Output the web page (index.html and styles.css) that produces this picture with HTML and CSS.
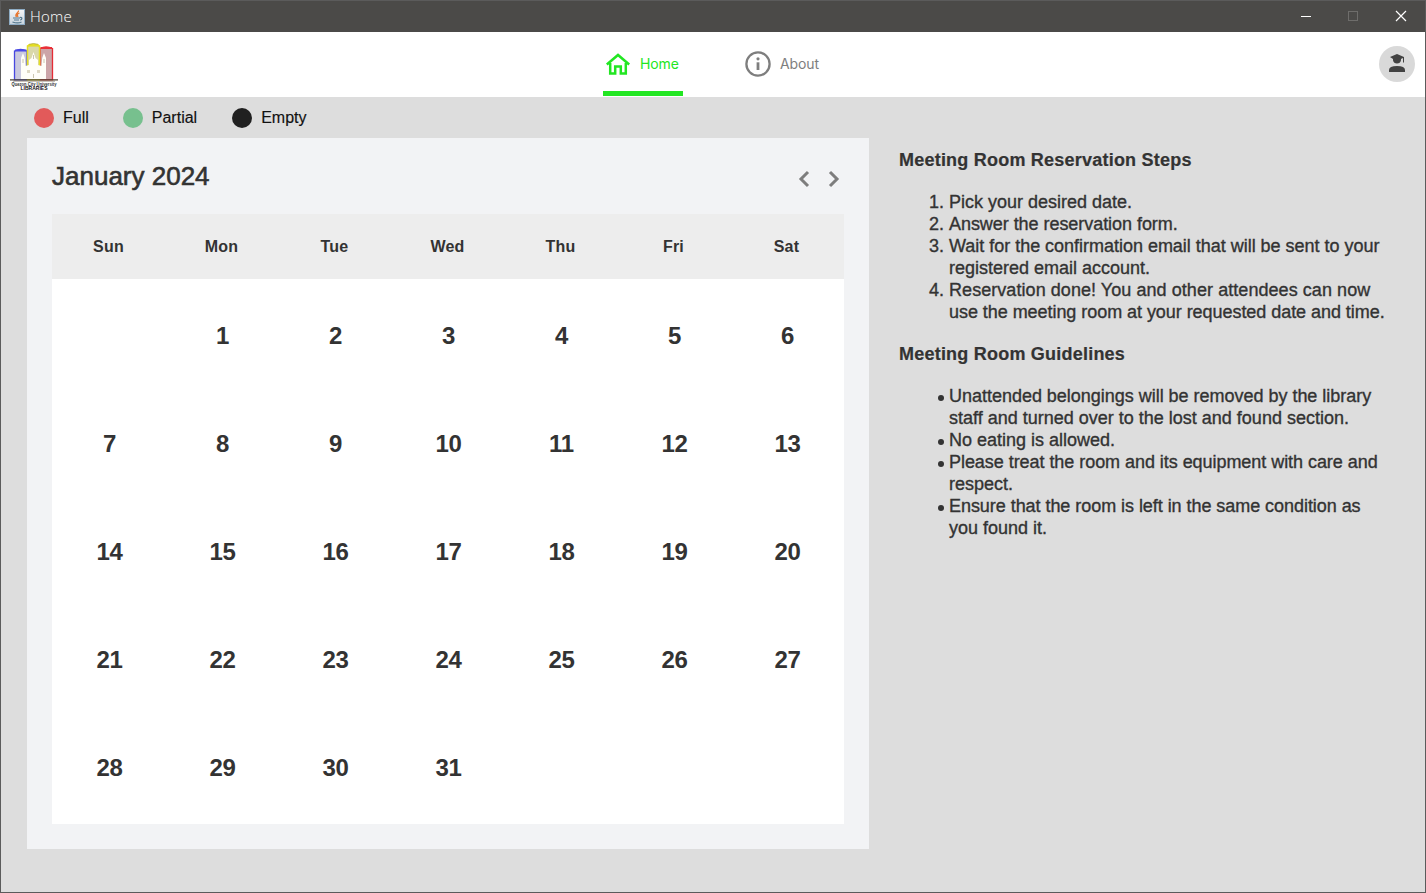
FILE: index.html
```
<!DOCTYPE html>
<html lang="en">
<head>
<meta charset="utf-8">
<title>Home</title>
<link rel="stylesheet" href="styles.css">
</head>
<body>
<div class="window">
  <div class="titlebar">
    <svg class="java" width="16" height="16" viewBox="0 0 16 16">
      <defs><linearGradient id="jg" x1="0" y1="0" x2="0" y2="1"><stop offset="0" stop-color="#f4f6f8"/><stop offset="1" stop-color="#c7d3dd"/></linearGradient></defs>
      <rect x=".5" y=".5" width="15" height="15" fill="url(#jg)" stroke="#8eacc4"/>
      <path d="M9.500 1.500C10 4 5 4.500 7.500 8M10.500 4C8 5 8 6 9 8" fill="none" stroke="#e8752d" stroke-width="1.300"/>
      <path d="M4 9h7M5 11h5M3.500 13c3 1 7 1 9 0M11 8.500c2.500-.5 2.500 2 0 2.500" fill="none" stroke="#54798f" stroke-width="1.200"/>
    </svg>
    <span class="caption">Home</span>
    <svg class="controls" width="126" height="31" viewBox="0 0 126 31">
      <path d="M1 15.500h10" stroke="#fff"/>
      <rect x="48.500" y="10.500" width="9" height="9" fill="none" stroke="#6e6d6b"/>
      <path d="M96 10l10 10M106 10l-10 10" stroke="#fff" stroke-width="1.200"/>
    </svg>
  </div>
  <header class="header">
    <svg class="logo" width="50" height="54" viewBox="0 0 50 54">
      <path d="M5.500 38V9q6-3 12.500 0v29z" fill="#c9c8de" stroke="#4747df" stroke-width="1.300"/>
      <path d="M6 8.500h11.500" stroke="#4b4be6" stroke-width="2"/>
      <path d="M31 38V6.500q6-3 12.500 0V38z" fill="#cca5a8" stroke="#e52c35" stroke-width="1.300"/>
      <path d="M31.500 6H43" stroke="#ea2f37" stroke-width="2"/>
      <path d="M18.500 38V4q6-3.500 12 0v34z" fill="#dad8a9" stroke="#e5df25" stroke-width="1.500"/>
      <path d="M19 3.500h11" stroke="#e4de22" stroke-width="2.200"/>
      <path d="M20 2.300q4.500-1.500 9 0" fill="none" stroke="#a8a23c" stroke-width=".7"/>
      <path d="M12 37V16l2-5 1.800 5 .7 8 3.500-1v-5l2.500-2 2-6 2 6 2.500 2v5l3.500 1 .7-8 1.800-5 2 5v21z" fill="#fffef8"/>
      <path d="M18 31v-3h3v3M28 31v-3h3v3" fill="#ded9c5"/>
      <path d="M24.500 13v4M24.500 36v-4M14 17v4M35 17v4" stroke="#cbc6ae"/>
      <path d="M1 37.800h48" stroke="#4b4335" stroke-width="1.200"/><path d="M4 39h42" stroke="#8d8475"/>
      <text class="logo-name" x="25" y="43.500" textLength="45" lengthAdjust="spacingAndGlyphs" text-anchor="middle">Quezon City University</text>
      <text class="logo-lib" x="25" y="48" textLength="27" lengthAdjust="spacingAndGlyphs" text-anchor="middle">LIBRARIES</text>
    </svg>
    <nav class="nav">
      <a class="tab active">
        <svg width="24" height="22" viewBox="0 0 24 22" fill="none" stroke="#22e622" stroke-width="2.500"><path d="M.8 11.500L12 2l11.200 9.500M4.200 10v10.500h5v-7h5.600v7h5V10"/></svg>
        <span>Home</span>
      </a>
      <a class="tab about">
        <svg width="26" height="26" viewBox="0 0 26 26"><circle cx="13" cy="13" r="11.600" fill="none" stroke="#7e7e7e" stroke-width="2.300"/><circle cx="13" cy="7.800" r="1.600" fill="#7e7e7e"/><path d="M13 11.300v7.700" stroke="#7e7e7e" stroke-width="2.800"/></svg>
        <span>About</span>
      </a>
    </nav>
    <svg class="avatar" width="36" height="36" viewBox="0 0 36 36">
      <circle cx="18" cy="18" r="18" fill="#d9d9d9"/>
      <g fill="#424242"><path d="M11 11l7-3 7 3v5.500h-1V12l-2 1v1.200a4.100 4.100 0 0 1-8 0V13z"/><path d="M10 26v-2q0-4 8-4t8 4v2z"/></g>
    </svg>
  </header>
  <div class="legend">
    <span class="item"><i class="dot full"></i>Full</span>
    <span class="item"><i class="dot partial"></i>Partial</span>
    <span class="item"><i class="dot empty"></i>Empty</span>
  </div>
  <main class="main">
    <section class="calendar">
      <div class="cal-head">
        <h1>January 2024</h1>
        <svg width="42" height="18" viewBox="0 0 42 18" fill="none" stroke="#7d7d7d" stroke-width="3"><path d="M10 2L3 9l7 7M32 2l7 7-7 7"/></svg>
      </div>
      <div class="week"><span>Sun</span><span>Mon</span><span>Tue</span><span>Wed</span><span>Thu</span><span>Fri</span><span>Sat</span></div>
      <div class="days">
        <span></span><span>1</span><span>2</span><span>3</span><span>4</span><span>5</span><span>6</span>
        <span>7</span><span>8</span><span>9</span><span>10</span><span>11</span><span>12</span><span>13</span>
        <span>14</span><span>15</span><span>16</span><span>17</span><span>18</span><span>19</span><span>20</span>
        <span>21</span><span>22</span><span>23</span><span>24</span><span>25</span><span>26</span><span>27</span>
        <span>28</span><span>29</span><span>30</span><span>31</span>
      </div>
    </section>
    <aside class="info">
      <h2>Meeting Room Reservation Steps</h2>
      <ul class="list">
        <li><b class="num">1.</b><p>Pick your desired date.</p></li>
        <li><b class="num">2.</b><p class="snug">Answer the reservation form.</p></li>
        <li><b class="num">3.</b><p><span class="tight">Wait for the confirmation email that will be sent to your</span><br>registered email account.</p></li>
        <li><b class="num">4.</b><p><span class="loose">Reservation done! You and other attendees can now</span><br><span class="snug">use the meeting room at your requested date and time.</span></p></li>
      </ul>
      <h2>Meeting Room Guidelines</h2>
      <ul class="list">
        <li><b class="bullet"></b><p><span class="tight">Unattended belongings will be removed by the library</span><br>staff and turned over to the lost and found section.</p></li>
        <li><b class="bullet"></b><p>No eating is allowed.</p></li>
        <li><b class="bullet"></b><p><span class="snug">Please treat the room and its equipment with care and</span><br>respect.</p></li>
        <li><b class="bullet"></b><p><span class="snug">Ensure that the room is left in the same condition as</span><br>you found it.</p></li>
      </ul>
    </aside>
  </main>
</div>
</body>
</html>
```

FILE: styles.css
```
* { box-sizing: border-box; }
body { margin: 0; font-family: "Liberation Sans", Arial, sans-serif; color: #333; overflow: hidden; }
h1, h2, p, ul { margin: 0; padding: 0; }
svg { display: block; flex: none; }
.window { width: 1426px; height: 893px; background: #ddd; border: 1px solid #5b5b5b; }
.titlebar { height: 31px; background: #4b4a48; display: flex; align-items: center; padding: 0 0 0 8px; }
.caption { font: 300 15px/20px "Open Sans", sans-serif; color: #fff; margin: -2px 0 0 5px; letter-spacing: .2px; }
.controls { margin-left: auto; margin-right: -1px; }
.header { height: 65px; background: #fff; display: grid; grid-template-columns: 1fr auto 1fr; padding: 0 10px 0 8px; }
.logo { margin-top: 10px; overflow: visible; }
.logo-name { font: bold 4.5px "Liberation Sans", sans-serif; fill: #333; }
.logo-lib { font: bold 4.8px "Liberation Sans", sans-serif; fill: #111; }
.nav { display: flex; gap: 60px; margin-left: 2px; }
.tab { display: flex; align-items: center; width: 80px; height: 64px; font: 400 14px Inter, sans-serif; color: #7e7e7e; gap: 10px; padding-left: 2px; white-space: nowrap; }
.tab span { margin-top: -1px; letter-spacing: -.1px; }
.tab svg { margin-left: 1px; }
.active { color: #22e622; border-bottom: 5px solid #22e622; padding-top: 5px; }
.about { width: 80px; gap: 9px; padding-left: 1px; }
.avatar { justify-self: end; margin-top: 14px; }
.legend { display: flex; gap: 34px; height: 41px; padding-left: 33px; align-items: center; font-size: 16px; color: #111; -webkit-text-stroke: .15px #111; }
.item { display: flex; align-items: center; gap: 9px; }
.item:last-child { margin-left: 1px; }
.dot { width: 20px; height: 20px; border-radius: 50%; }
.full { background: #e25a5a; }
.partial { background: #77c08e; }
.empty { background: #202020; }
.main { display: flex; padding-left: 26px; gap: 30px; }
.calendar { width: 842px; height: 711px; background: #f2f3f5; padding: 0 25px; }
.cal-head { height: 76px; display: flex; justify-content: space-between; padding-right: 4px; }
.cal-head h1 { font-size: 26px; font-weight: 400; line-height: 30px; margin-top: 23px; -webkit-text-stroke: .6px #333; }
.cal-head svg { margin-top: 32px; }
.week { height: 65px; background: #ededed; display: grid; grid-template-columns: repeat(7, 1fr); align-items: center; text-align: center; font-size: 16px; font-weight: 700; letter-spacing: .2px; padding-right: 1px; }
.days { height: 545px; background: #fff; display: grid; grid-template-columns: repeat(7, 1fr); grid-template-rows: repeat(5, 108px); padding: 3px 0 2px 1px; align-items: center; text-align: center; font-size: 24px; font-weight: 700; letter-spacing: -.3px; }
.info { font-size: 18px; line-height: 22px; padding-top: 11px; }
.info h2 { font-size: 18px; line-height: 22px; letter-spacing: .22px; -webkit-text-stroke: .2px #333; }
.list { list-style: none; margin: 20px 0; }
.list li { display: flex; }
.list p { white-space: nowrap; -webkit-text-stroke: .35px #333; }
.tight { letter-spacing: -.02px; }
.snug { letter-spacing: -.05px; }
.loose { letter-spacing: .06px; }
.num { width: 50px; padding-right: 5px; text-align: right; font-weight: 400; -webkit-text-stroke: .35px #333; }
.bullet { width: 6px; height: 6px; border-radius: 50%; background: #333; margin: 10px 5px 0 39px; }
```
